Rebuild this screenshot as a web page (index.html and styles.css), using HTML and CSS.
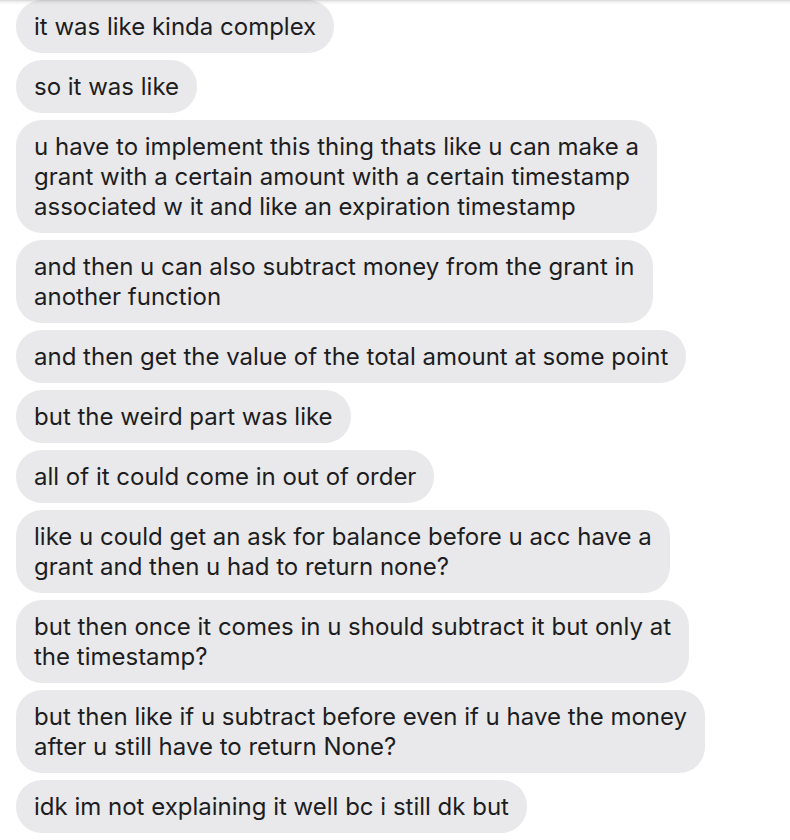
FILE: index.html
```html
<!DOCTYPE html>
<html>
<head>
<meta charset="utf-8">
<link rel="stylesheet" href="styles.css">
</head>
<body>
<div class="topshadow"></div>
<div class="thread">
  <div class="bubble">it was like kinda complex</div>
  <div class="bubble">so it was like</div>
  <div class="bubble">u have to implement this thing thats like u can make a<br>grant with a certain amount with a certain timestamp<br>associated w it and like an expiration timestamp</div>
  <div class="bubble">and then u can also subtract money from the grant in<br>another function</div>
  <div class="bubble">and then get the value of the total amount at some point</div>
  <div class="bubble">but the weird part was like</div>
  <div class="bubble">all of it could come in out of order</div>
  <div class="bubble">like u could get an ask for balance before u acc have a<br>grant and then u had to return none?</div>
  <div class="bubble">but then once it comes in u should subtract it but only at<br>the timestamp?</div>
  <div class="bubble">but then like if u subtract before even if u have the money<br>after u still have to return None?</div>
  <div class="bubble">idk im not explaining it well bc i still dk but</div>
</div>
</body>
</html>
```
FILE: styles.css
```css
html, body {
  margin: 0;
  padding: 0;
  background: #ffffff;
}
body {
  font-family: Inter, "Liberation Sans", sans-serif;
  width: 790px;
  height: 840px;
  overflow: hidden;
  position: relative;
}
.topshadow {
  position: absolute;
  top: 0;
  left: 0;
  right: 0;
  height: 5px;
  background: linear-gradient(to bottom, rgba(0,0,0,0.16), rgba(0,0,0,0.05) 40%, rgba(0,0,0,0));
  z-index: 2;
}
.thread {
  display: flex;
  flex-direction: column;
  align-items: flex-start;
  gap: 7px;
  padding: 0 0 0 16px;
}
.bubble {
  background: #e9e9eb;
  color: #1d1d1f;
  font-size: 24px;
  line-height: 30px;
  padding: 12px 18px 11px 18px;
  border-radius: 26px;
  white-space: nowrap;
}
```
